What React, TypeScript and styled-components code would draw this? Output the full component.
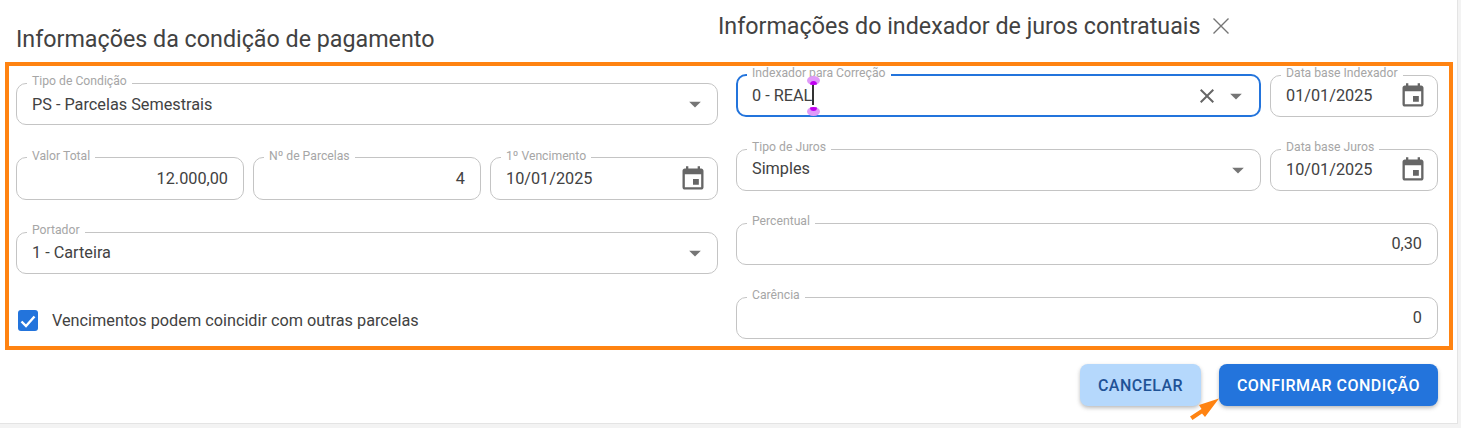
import React from "react";
import styled, { createGlobalStyle } from "styled-components";

const Global = createGlobalStyle`
  html, body { margin: 0; padding: 0; background: #f3f3f3; }
  * { box-sizing: border-box; }
  body { font-family: Roboto, "Liberation Sans", sans-serif; }
`;

const Page = styled.div`
  position: relative;
  width: 1461px;
  height: 428px;
  overflow: hidden;
`;

const Dialog = styled.div`
  width: 1458px;
  height: 424px;
  padding: 0 20px 0 16px;
  background: #fff;
  border-right: 1px solid #e4e4e4;
  border-bottom: 1px solid #e4e4e4;
  display: flex;
  flex-direction: column;
`;

const Columns = styled.div`
  display: grid;
  grid-template-columns: 702px 702px;
  column-gap: 18px;
`;

const LeftColumn = styled.section`
  display: flex;
  flex-direction: column;
  padding-top: 25px;
`;

const RightColumn = styled.section`
  display: flex;
  flex-direction: column;
  padding-top: 12px;
`;

const Title = styled.h2`
  margin: 0;
  height: 28px;
  font-size: 23.27px;
  line-height: 28px;
  font-weight: 400;
  color: #424242;
  white-space: nowrap;
`;

const LeftForm = styled.div`
  display: flex;
  flex-direction: column;
  gap: 32.5px;
  margin-top: 30px;
`;

const RightHeader = styled.div`
  display: flex;
  align-items: center;
  margin-left: -18px;
  gap: 12px;
`;

const RightForm = styled.div`
  display: flex;
  flex-direction: column;
  gap: 32px;
  margin-top: 35px;
`;

const Row = styled.div<{ $cols: string }>`
  display: grid;
  grid-template-columns: ${(p) => p.$cols};
  column-gap: 9px;
`;

const FieldBox = styled.div<{ $right?: boolean; $end?: number }>`
  position: relative;
  height: 42px;
  display: flex;
  align-items: center;
  padding: 0 ${(p) => p.$end ?? 16}px 0 16px;
  font-size: 16.25px;
  color: #424242;
  justify-content: ${(p) => (p.$right ? "flex-end" : "space-between")};
`;

const Outline = styled.fieldset<{ $focus?: boolean }>`
  position: absolute;
  inset: -6px 0 0 0;
  margin: 0;
  padding: 0 0 0 10px;
  border: ${(p) => (p.$focus ? "2px solid #2374dc" : "1px solid #c4c4c4")};
  border-radius: 10px;
  pointer-events: none;
`;

const Legend = styled.legend<{ $focus?: boolean }>`
  padding: 0 5px;
  margin-left: ${(p) => (p.$focus ? "-1px" : "0")};
  font-size: 12.2px;
  line-height: 12px;
  height: 12px;
  color: #a6a6a6;
  white-space: nowrap;
`;

const LegendText = styled.span`
  position: relative;
  top: -2px;
`;

const Value = styled.span<{ $up?: number }>`
  position: relative;
  top: ${(p) => -(p.$up ?? 0)}px;
  white-space: nowrap;
`;

const Icons = styled.span`
  display: flex;
  align-items: center;
  gap: 3px;
  flex: none;
`;

const IconSvg = styled.svg<{ $size: number; $color?: string }>`
  display: block;
  width: ${(p) => p.$size}px;
  height: ${(p) => p.$size}px;
  fill: ${(p) => p.$color ?? "#666"};
  flex: none;
`;

const Caret = () => (
  <IconSvg $size={28} $color="#757575" viewBox="0 0 24 24">
    <path d="M7 10l5 5 5-5z" />
  </IconSvg>
);

const Calendar = () => (
  <IconSvg $size={28} viewBox="0 0 24 24">
    <path d="M17 12h-5v5h5v-5zM16 1v2H8V1H6v2H5c-1.11 0-1.99.9-1.99 2L3 19c0 1.1.89 2 2 2h14c1.1 0 2-.9 2-2V5c0-1.1-.9-2-2-2h-1V1h-2zm3 18H5V8h14v11z" />
  </IconSvg>
);

const Clear = () => (
  <IconSvg $size={24} viewBox="0 0 24 24">
    <path d="M19 6.41 17.59 5 12 10.59 6.41 5 5 6.41 10.59 12 5 17.59 6.41 19 12 13.41 17.59 19 19 17.59 13.41 12z" />
  </IconSvg>
);

const CloseSvg = styled.svg`
  display: block;
  width: 18px;
  height: 18px;
  fill: none;
  stroke: #757575;
  stroke-width: 1.4;
  flex: none;
`;

const Field: React.FC<{
  label: string;
  value: string;
  right?: boolean;
  focus?: boolean;
  up?: number;
  end?: number;
  children?: React.ReactNode;
}> = ({ label, value, right, focus, up, end, children }) => (
  <FieldBox $right={right} $end={end}>
    <Value $up={up}>{value}</Value>
    {children}
    <Outline $focus={focus}>
      <Legend $focus={focus}>
        <LegendText>{label}</LegendText>
      </Legend>
    </Outline>
  </FieldBox>
);

const CaretField = styled.div`
  position: relative;
`;

const TextCursor = styled.span`
  position: absolute;
  left: 76px;
  top: 10px;
  width: 2px;
  height: 20px;
  background: #333;
`;

const Handle = styled.span<{ $top: number; $lower?: boolean }>`
  position: absolute;
  left: 71px;
  top: ${(p) => p.$top}px;
  width: 13px;
  height: 9px;
  border-radius: 50%;
  background: #e09af8;
  overflow: hidden;
  &::after {
    content: "";
    position: absolute;
    left: 3px;
    width: 7px;
    height: 7px;
    border-radius: 50%;
    background: #c000f0;
    top: ${(p) => (p.$lower ? "-3px" : "5px")};
  }
`;

const CheckRow = styled.label`
  display: flex;
  align-items: center;
  gap: 14px;
  margin-top: 36px;
  padding-left: 2px;
  height: 21px;
  font-size: 16.25px;
  color: #424242;
`;

const CheckBox = styled.span`
  width: 20px;
  height: 21px;
  border-radius: 3px;
  background: #2374dc;
  display: flex;
  align-items: center;
  justify-content: center;
  flex: none;
`;

const CheckSvg = styled.svg`
  width: 20px;
  height: 20px;
  fill: none;
  stroke: #fff;
  stroke-width: 2.4;
`;

const Actions = styled.div`
  display: flex;
  justify-content: flex-end;
  gap: 18px;
  margin-top: 25px;
  width: 1422px;
`;

const Button = styled.button<{ $primary?: boolean }>`
  height: 42px;
  width: ${(p) => (p.$primary ? "219px" : "121px")};
  padding: 0;
  border: 0;
  border-radius: 8px;
  font-family: inherit;
  font-size: 16px;
  font-weight: 500;
  letter-spacing: 0.46px;
  text-transform: uppercase;
  background: ${(p) => (p.$primary ? "#2374dc" : "#b5d8fc")};
  color: ${(p) => (p.$primary ? "#fff" : "#1f5296")};
  box-shadow: 0 2px 4px -1px rgba(0, 0, 0, 0.2), 0 2px 5px rgba(0, 0, 0, 0.14);
`;

const OrangeFrame = styled.div`
  position: absolute;
  left: 5px;
  top: 62px;
  width: 1448px;
  height: 288px;
  border: 4px solid #ff8311;
  pointer-events: none;
`;

const ArrowSvg = styled.svg`
  position: absolute;
  left: 1186px;
  top: 396px;
  width: 36px;
  height: 28px;
  fill: #ff8311;
`;

export default function App() {
  return (
    <Page>
      <Global />
      <Dialog>
        <Columns>
          <LeftColumn>
            <Title>Informações da condição de pagamento</Title>
            <LeftForm>
              <Field label="Tipo de Condição" value="PS - Parcelas Semestrais" end={9}>
                <Caret />
              </Field>
              <Row $cols="228px 228px 228px">
                <Field label="Valor Total" value="12.000,00" right />
                <Field label="Nº de Parcelas" value="4" right />
                <Field label="1º Vencimento" value="10/01/2025" end={11}>
                  <Calendar />
                </Field>
              </Row>
              <Field label="Portador" value="1 - Carteira" up={1} end={9}>
                <Caret />
              </Field>
            </LeftForm>
            <CheckRow>
              <CheckBox>
                <CheckSvg viewBox="0 0 20 20">
                  <path d="M3.5 10.5 8 15 16.5 5.5" />
                </CheckSvg>
              </CheckBox>
              Vencimentos podem coincidir com outras parcelas
            </CheckRow>
          </LeftColumn>
          <RightColumn>
            <RightHeader>
              <Title>Informações do indexador de juros contratuais</Title>
              <CloseSvg viewBox="0 0 18 18">
                <path d="M1.5 1.5 16.5 16.5M16.5 1.5 1.5 16.5" />
              </CloseSvg>
            </RightHeader>
            <RightForm>
              <Row $cols="525px 168px">
                <CaretField>
                  <Field label="Indexador para Correção" value="0 - REAL" up={1} focus end={11}>
                    <Icons>
                      <Clear />
                      <Caret />
                    </Icons>
                  </Field>
                  <TextCursor />
                  <Handle $top={1} />
                  <Handle $top={32} $lower />
                </CaretField>
                <Field label="Data base Indexador" value="01/01/2025" up={1} end={11}>
                  <Calendar />
                </Field>
              </Row>
              <Row $cols="525px 168px">
                <Field label="Tipo de Juros" value="Simples" up={2} end={9}>
                  <Caret />
                </Field>
                <Field label="Data base Juros" value="10/01/2025" up={1} end={11}>
                  <Calendar />
                </Field>
              </Row>
              <Field label="Percentual" value="0,30" up={1} right />
              <Field label="Carência" value="0" up={1} right />
            </RightForm>
          </RightColumn>
        </Columns>
        <Actions>
          <Button>Cancelar</Button>
          <Button $primary>Confirmar condição</Button>
        </Actions>
      </Dialog>
      <OrangeFrame />
      <ArrowSvg viewBox="0 0 36 28">
        <path d="M4 20.5 6.5 24 16 17.5 19 21 33 2.5 13 9 15.5 13z" />
      </ArrowSvg>
    </Page>
  );
}
